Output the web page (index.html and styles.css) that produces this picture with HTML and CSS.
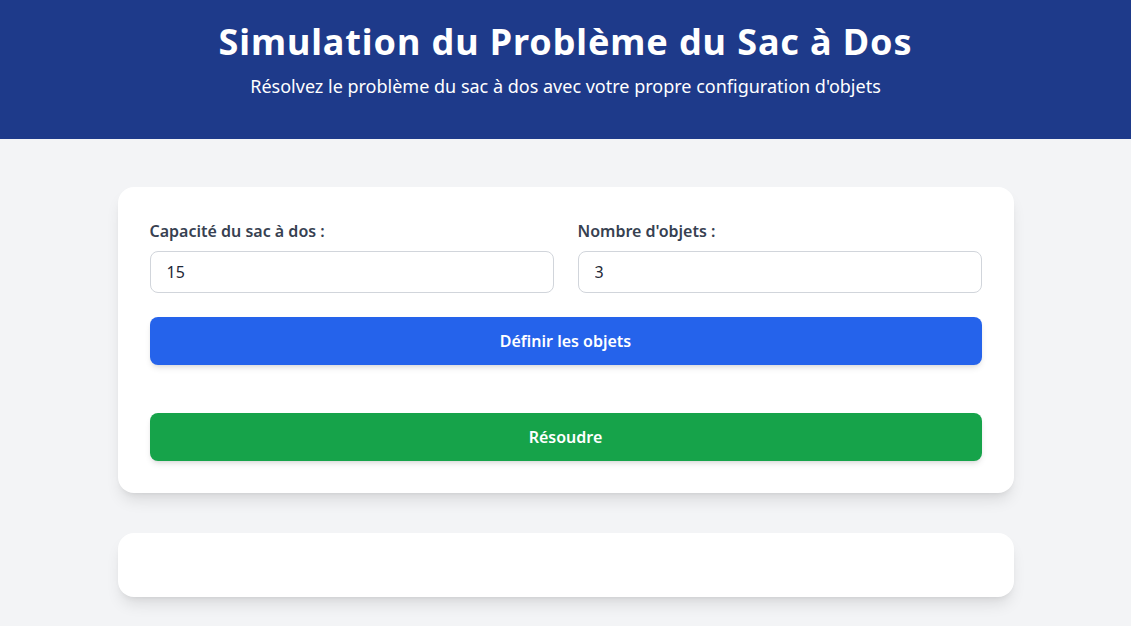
FILE: index.html
```html
<!DOCTYPE html>
<html lang="fr">
<head>
<meta charset="utf-8">
<title>Simulation du Problème du Sac à Dos</title>
<link rel="stylesheet" href="styles.css">
</head>
<body>
<header class="hero">
  <h1 class="hero-title">Simulation du Problème du Sac à Dos</h1>
  <p class="hero-sub">Résolvez le problème du sac à dos avec votre propre configuration d'objets</p>
</header>
<main class="main">
  <section class="card">
    <div class="fields">
      <div class="field">
        <label class="label" for="cap">Capacité du sac à dos :</label>
        <input class="input" id="cap" type="number" value="15">
      </div>
      <div class="field">
        <label class="label" for="nb">Nombre d'objets :</label>
        <input class="input" id="nb" type="number" value="3">
      </div>
    </div>
    <button class="btn btn-blue">Définir les objets</button>
    <div class="items"></div>
    <button class="btn btn-green">Résoudre</button>
  </section>
  <section class="card card-result"></section>
</main>
</body>
</html>
```
FILE: styles.css
```css
* { box-sizing: border-box; }
html, body { margin: 0; padding: 0; }
body {
  background: #f3f4f6;
  font-family: "Noto Sans", "Open Sans", sans-serif;
  color: #1f2937;
}
.hero {
  background: #1e3a8a;
  color: #fff;
  text-align: center;
  padding: 22px 16px 39px;
}
.hero-title {
  margin: 0 0 10px;
  font-size: 36px;
  line-height: 40px;
  font-weight: 700;
  letter-spacing: 0.025em;
}
.hero-sub {
  margin: 0;
  font-size: 18px;
  line-height: 28px;
}
.main {
  max-width: 896px;
  margin: 48px auto 0;
  padding-bottom: 32px;
}
.card {
  background: #fff;
  border-radius: 16px;
  padding: 32px;
  box-shadow: 0 10px 15px -3px rgba(0,0,0,0.1), 0 4px 6px -4px rgba(0,0,0,0.1);
}
.card-result { margin-top: 40px; }
.fields {
  display: grid;
  grid-template-columns: 1fr 1fr;
  gap: 24px;
}
.field { display: flex; flex-direction: column; }
.label {
  font-size: 16px;
  line-height: 24px;
  font-weight: 600;
  color: #374151;
  margin-bottom: 8px;
}
.input {
  font-family: inherit;
  font-size: 16px;
  line-height: 24px;
  height: 42px;
  padding: 8px 16px;
  border: 1px solid #d1d5db;
  border-radius: 8px;
  color: #1f2937;
  background: #fff;
  -moz-appearance: textfield;
}
.input::-webkit-inner-spin-button, .input::-webkit-outer-spin-button { -webkit-appearance: none; margin: 0; }
.btn {
  display: block;
  width: 100%;
  border: 0;
  border-radius: 8px;
  padding: 12px 16px;
  font-family: inherit;
  font-size: 16px;
  line-height: 24px;
  font-weight: 600;
  color: #fff;
  box-shadow: 0 4px 6px -1px rgba(0,0,0,0.1), 0 2px 4px -2px rgba(0,0,0,0.1);
  cursor: pointer;
}
.btn-blue { background: #2563eb; margin-top: 24px; }
.btn-green { background: #16a34a; }
.items { height: 48px; }
```
